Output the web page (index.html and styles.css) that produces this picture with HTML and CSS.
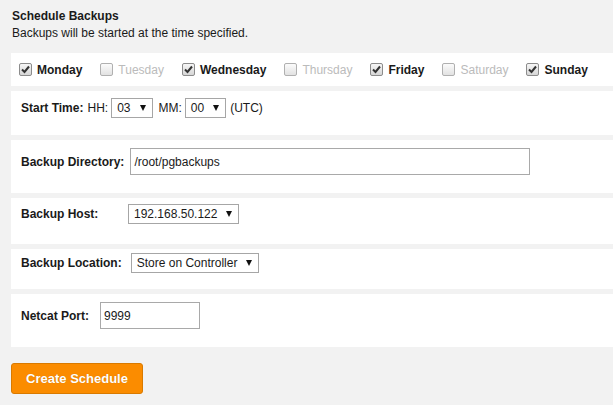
FILE: index.html
```html
<!DOCTYPE html>
<html>

<head>
    <title>Schedule Backups</title>
    <meta charset="UTF-8" />
    <link rel="stylesheet" href="styles.css">
</head>

<body>
    <div id="schedule">
        <h3 class="title">Schedule Backups</h3>
        <p class="desc">Backups will be started at the time specified.</p>

        <div class="panel days">
            <label class="day"><span class="cb checked"><svg viewBox="0 0 13 13" width="13" height="13"><path d="M3 6.5 L5.5 9 L10 3.5" /></svg></span>Monday</label>
            <label class="day off"><span class="cb"></span>Tuesday</label>
            <label class="day"><span class="cb checked"><svg viewBox="0 0 13 13" width="13" height="13"><path d="M3 6.5 L5.5 9 L10 3.5" /></svg></span>Wednesday</label>
            <label class="day off"><span class="cb"></span>Thursday</label>
            <label class="day"><span class="cb checked"><svg viewBox="0 0 13 13" width="13" height="13"><path d="M3 6.5 L5.5 9 L10 3.5" /></svg></span>Friday</label>
            <label class="day off"><span class="cb"></span>Saturday</label>
            <label class="day"><span class="cb checked"><svg viewBox="0 0 13 13" width="13" height="13"><path d="M3 6.5 L5.5 9 L10 3.5" /></svg></span>Sunday</label>
        </div>

        <div class="panel row row-time">
            <b class="lbl">Start Time:</b>
            <span class="small">HH:</span>
            <span class="select sel-hh"><span>03</span><i class="arrow"></i></span>
            <span class="small mm">MM:</span>
            <span class="select sel-mm"><span>00</span><i class="arrow"></i></span>
            <span class="small utc">(UTC)</span>
        </div>

        <div class="panel row row-dir">
            <b class="lbl">Backup Directory:</b>
            <input type="text" class="field field-dir" value="/root/pgbackups">
        </div>

        <div class="panel row row-host">
            <b class="lbl lbl-host">Backup Host:</b>
            <span class="select sel-host"><span>192.168.50.122</span><i class="arrow"></i></span>
        </div>

        <div class="panel row row-loc">
            <b class="lbl lbl-loc">Backup Location:</b>
            <span class="select sel-loc"><span>Store on Controller</span><i class="arrow"></i></span>
        </div>

        <div class="panel row row-port">
            <b class="lbl lbl-port">Netcat Port:</b>
            <input type="text" class="field field-port" value="9999">
        </div>

        <button class="btn">Create Schedule</button>
    </div>
</body>

</html>
```

FILE: styles.css
```css
body {
    margin: 0;
    background: #f2f2f2;
    font-family: "Liberation Sans", Arial, sans-serif;
    font-size: 12px;
    color: #1a1a1a;
}

#schedule {
    padding: 8px 0 0 11px;
}

.title {
    margin: 0 0 0 1px;
    font-size: 12px;
    line-height: 16px;
    font-weight: bold;
}

.desc {
    margin: 1px 0 0 1px;
    line-height: 16px;
}

.panel {
    background: #fff;
    margin-bottom: 5px;
}

.days {
    margin-top: 12px;
    height: 33px;
    padding: 0 8px;
    display: flex;
    align-items: center;
}

.day {
    display: flex;
    align-items: center;
    font-weight: bold;
    margin-right: 18px;
}

.day.off {
    font-weight: normal;
    color: #bbb;
}

.cb {
    width: 11px;
    height: 11px;
    border: 1px solid #8c8c8c;
    border-radius: 2px;
    background: linear-gradient(#f6f6f6, #d6d6d6);
    margin-right: 5px;
    position: relative;
}

.day.off .cb {
    border-color: #b0b0b0;
    background: linear-gradient(#fbfbfb, #e2e2e2);
}

.cb svg {
    position: absolute;
    left: -1px;
    top: -1px;
}

.cb path {
    fill: none;
    stroke: #333;
    stroke-width: 2;
}

.row {
    display: flex;
    align-items: center;
    padding-left: 10px;
}

.lbl {
    margin-right: 6px;
}

.row-time {
    padding-top: 7px;
    padding-bottom: 17px;
}

.row-time .lbl {
    margin-right: 4px;
}

.small {
    margin-right: 3px;
}

.mm {
    margin-left: 6px;
}

.utc {
    margin-left: 4px;
}

.row-dir {
    padding-top: 8px;
    padding-bottom: 18px;
}

.row-host {
    padding-top: 6px;
    padding-bottom: 20px;
}

.lbl-host {
    width: 107px;
    margin-right: 0;
}

.row-loc {
    padding-top: 4px;
    padding-bottom: 16px;
}

.lbl-loc {
    margin-right: 9px;
}

.row-port {
    padding-top: 8px;
    padding-bottom: 18px;
}

.lbl-port {
    margin-right: 11px;
}

.select {
    display: inline-flex;
    align-items: center;
    height: 18px;
    border: 1px solid #a6a6a6;
    padding: 0 6px 0 5px;
    background: #fff;
}

.arrow {
    width: 0;
    height: 0;
    border-left: 3.5px solid transparent;
    border-right: 3.5px solid transparent;
    border-top: 6px solid #111;
    margin-left: 9px;
}

.field {
    height: 27px;
    box-sizing: border-box;
    border: 1px solid #a9a9a9;
    padding: 0 0 0 3px;
    font-family: "Liberation Sans", Arial, sans-serif;
    font-size: 12px;
    color: #1a1a1a;
    outline: none;
}

.field-dir {
    width: 400px;
}

.field-port {
    width: 100px;
}

.btn {
    margin-top: 11px;
    width: 132px;
    height: 31px;
    background: #fb8c00;
    border: 1px solid #d97a00;
    border-radius: 3px;
    color: #fff;
    font-family: "Liberation Sans", Arial, sans-serif;
    font-size: 13px;
    font-weight: bold;
    padding: 0;
    text-shadow: 0 0 1px rgba(0, 0, 0, 0.2);
}
```
